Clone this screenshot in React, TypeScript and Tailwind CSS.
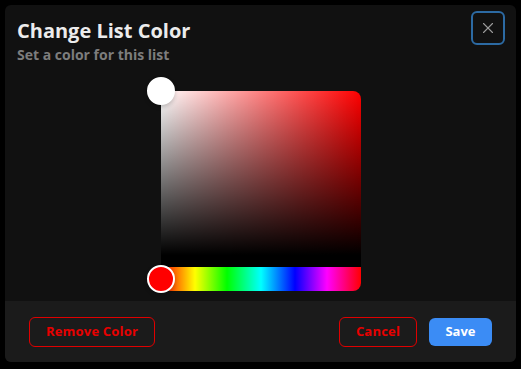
import { X } from "lucide-react";

function ColorPicker() {
  return (
    <div className="relative flex h-[200px] w-[200px] flex-col">
      <div
        className="relative flex-1 rounded-t-lg border-b-[12px] border-black bg-[#ff0000]"
        style={{
          backgroundImage:
            "linear-gradient(to top, #000, rgba(0,0,0,0)), linear-gradient(to right, #fff, rgba(255,255,255,0))",
        }}
      >
        <div className="absolute left-0 top-0 h-7 w-7 -translate-x-1/2 -translate-y-1/2 rounded-full border-2 border-white bg-white shadow-[0_2px_4px_rgba(0,0,0,0.2)]" />
      </div>
      <div className="relative h-6 rounded-b-lg bg-[linear-gradient(to_right,#f00_0%,#ff0_17%,#0f0_33%,#0ff_50%,#00f_67%,#f0f_83%,#f00_100%)]">
        <div className="absolute left-0 top-1/2 h-7 w-7 -translate-x-1/2 -translate-y-1/2 rounded-full border-2 border-white bg-[#ff0000] shadow-[0_2px_4px_rgba(0,0,0,0.2)]" />
      </div>
    </div>
  );
}

export default function App() {
  return (
    <div className="h-[369px] w-[521px] bg-black p-[5px] font-['Open_Sans',sans-serif]">
      <div className="flex h-[357px] flex-col overflow-hidden rounded-md bg-[#111111]">
        <div className="relative px-3 pt-3">
          <h2 className="text-[20px] font-bold leading-7 text-[#ececec]">Change List Color</h2>
          <p className="text-sm font-bold leading-5 text-[#7d7d7d]">Set a color for this list</p>
          <button className="absolute right-[11px] top-[6px] flex h-[34px] w-[34px] items-center justify-center rounded-md border-[2.5px] border-[#2c6aa3] text-[#9a9a9a]">
            <X size={18} strokeWidth={1.5} />
          </button>
        </div>
        <div className="flex flex-1 justify-center pt-[26px]">
          <ColorPicker />
        </div>
        <div className="flex h-[61px] items-center justify-between bg-[#1b1b1b] px-6">
          <button className="h-[30px] w-[126px] rounded-md border border-[#e00000] text-[13px] font-bold tracking-[0.2px] text-[#e80000]">
            Remove Color
          </button>
          <div className="flex items-center gap-3">
            <button className="h-[30px] w-[78px] rounded-md border border-[#e00000] text-[13px] font-bold tracking-[0.2px] text-[#e80000]">
              Cancel
            </button>
            <button className="h-[28px] w-[63px] rounded-md bg-[#3b8cf5] text-[13px] font-bold text-white">
              Save
            </button>
          </div>
        </div>
      </div>
    </div>
  );
}
